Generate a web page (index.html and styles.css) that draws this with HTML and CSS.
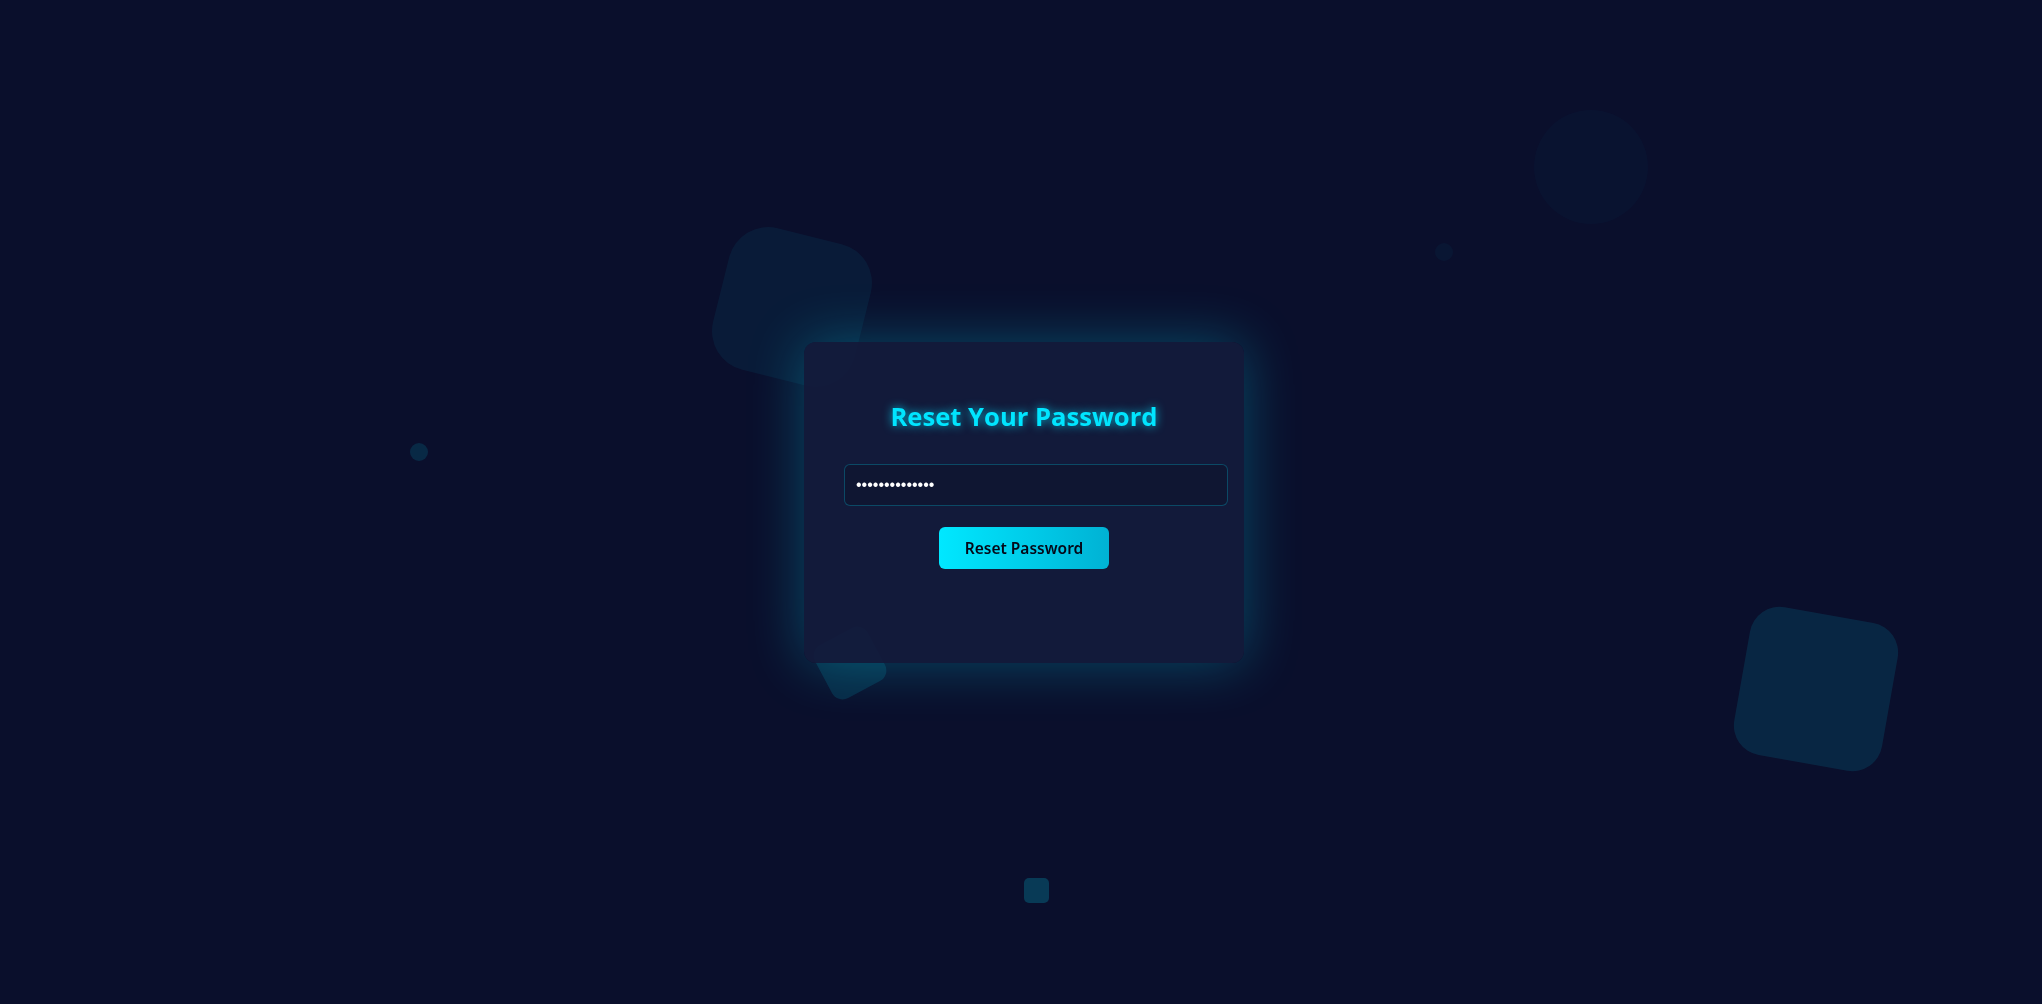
FILE: index.html
```html
<!DOCTYPE html>
<html lang="en">
<head>
<meta charset="utf-8">
<title>Reset Your Password</title>
<link rel="stylesheet" href="styles.css">
</head>
<body>
<div class="shapes" aria-hidden="true">
  <div class="shape s1"></div>
  <div class="shape s2"></div>
  <div class="shape s3"></div>
  <div class="shape s4"></div>
  <div class="shape s5"></div>
  <div class="shape s6"></div>
  <div class="shape s7"></div>
</div>
<main class="page">
  <section class="card">
    <h2 class="title">Reset Your Password</h2>
    <form class="form">
      <input class="field" type="password" value="12345678901234" aria-label="New password">
      <button class="btn" type="button">Reset Password</button>
    </form>
  </section>
</main>
</body>
</html>
```
FILE: styles.css
```css
html, body {
  margin: 0;
  height: 100%;
}
body {
  background: #0a0f2c;
  font-family: "Open Sans", "Noto Sans", sans-serif;
  overflow: hidden;
}
.shapes {
  position: fixed;
  inset: 0;
  z-index: 0;
}
.shape {
  position: absolute;
  background: #00e5ff;
}
.s1 { left: 719px; top: 234px; width: 146px; height: 146px; border-radius: 40px; transform: rotate(14deg); opacity: 0.06; }
.s2 { left: 1534px; top: 110px; width: 114px; height: 114px; border-radius: 50%; opacity: 0.025; }
.s3 { left: 1435px; top: 243px; width: 18px; height: 18px; border-radius: 50%; opacity: 0.035; }
.s4 { left: 410px; top: 443px; width: 18px; height: 18px; border-radius: 50%; opacity: 0.12; }
.s5 { left: 1741px; top: 614px; width: 150px; height: 150px; border-radius: 30px; transform: rotate(10deg); opacity: 0.11; }
.s6 { left: 1024px; top: 878px; width: 25px; height: 25px; border-radius: 5px; opacity: 0.2; }
.s7 { left: 820px; top: 633px; width: 60px; height: 60px; border-radius: 12px; transform: rotate(-28deg); opacity: 0.12; }

.page {
  position: relative;
  z-index: 1;
  height: 100%;
  display: flex;
  align-items: center;
  justify-content: center;
  padding-left: 6px;
  box-sizing: border-box;
}
.card {
  width: 360px;
  padding: 57px 40px 94px;
  background: rgba(19, 27, 60, 0.92);
  border-radius: 12px;
  box-shadow: 0 0 55px rgba(0, 229, 255, 0.28);
}
.title {
  margin: 0 0 30px;
  text-align: center;
  color: #00e5ff;
  font-size: 25.6px;
  font-weight: 700;
  line-height: normal;
  text-shadow: 0 0 10px rgba(0, 229, 255, 0.8);
}
.form {
  display: block;
}
.field {
  display: block;
  width: 100%;
  box-sizing: content-box;
  margin: 0;
  padding: 11px;
  height: 18px;
  border: 1px solid rgba(0, 229, 255, 0.25);
  border-radius: 6px;
  background: #0f1632;
  color: #ffffff;
  font-family: "Liberation Sans", sans-serif;
  font-size: 16px;
  line-height: 18px;
  outline: none;
}
.btn {
  display: block;
  margin: 21px auto 0;
  height: 42px;
  padding: 0 26px;
  border: none;
  border-radius: 6px;
  background: linear-gradient(90deg, #00e8ff 0%, #00c8e6 60%, #00b2d4 100%);
  color: #050818;
  font-family: "Noto Sans", sans-serif;
  font-size: 15.5px;
  font-weight: 600;
  cursor: pointer;
}
```
